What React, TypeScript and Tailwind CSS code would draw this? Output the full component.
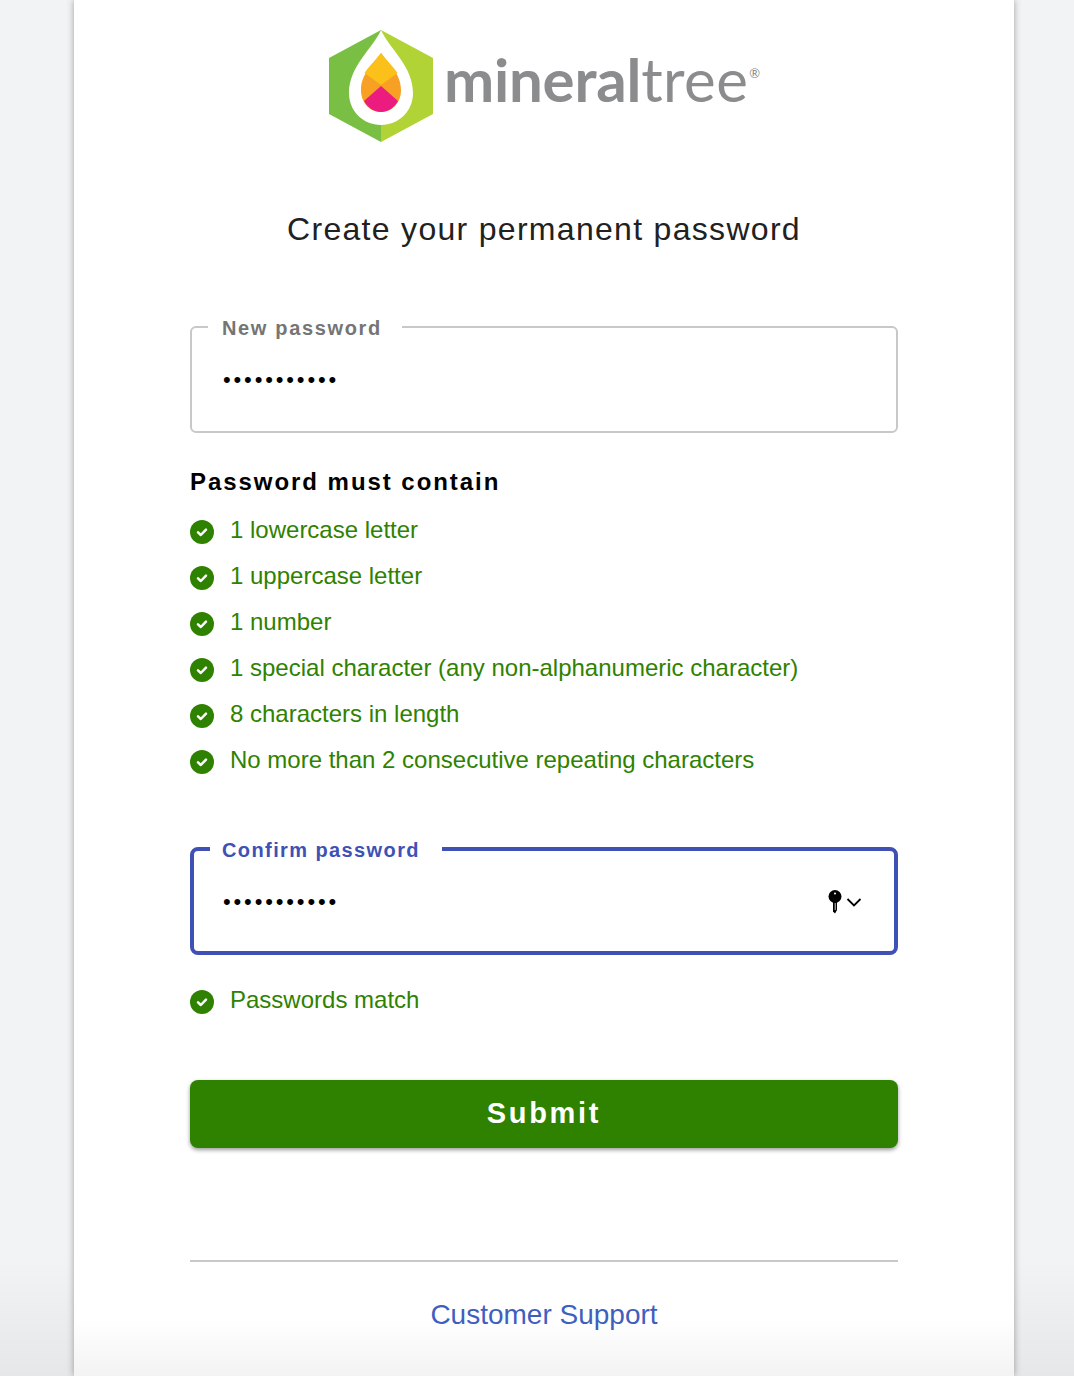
import React from "react";

const RULES = [
	"1 lowercase letter",
	"1 uppercase letter",
	"1 number",
	"1 special character (any non-alphanumeric character)",
	"8 characters in length",
	"No more than 2 consecutive repeating characters",
];

const DOTS = "•••••••••••";

const CheckBadge = () => (
	<svg className="w-6 h-6 shrink-0 mt-[4px]" viewBox="0 0 24 24">
		<circle cx="12" cy="12" r="12" fill="#2f8200" />
		<path
			d="M8 12.400l2.800 2.600 5.200-5.400"
			fill="none"
			stroke="#fff"
			strokeWidth="2.500"
			strokeLinecap="round"
			strokeLinejoin="round"
		/>
	</svg>
);

const Rule = ({ text }: { text: string }) => (
	<div className="flex items-start h-[46px]">
		<CheckBadge />
		<span className="ml-4 text-[24px] leading-[28px] text-[#2f8200] whitespace-nowrap">
			{text}
		</span>
	</div>
);

const Logo = () => (
	<div className="flex items-start justify-center h-[112px] pl-[1px]">
		<svg className="w-[104px] h-[112px] shrink-0" viewBox="0 0 104 112">
			<path d="M52 0L0 28v56l52 28z" fill="#78bf43" />
			<path d="M52 0l52 28v56l-52 28z" fill="#b1d335" />
			<path
				d="M52 0C44 18 20 36 20 63c0 18 14 32 32 32s32-14 32-32C84 36 60 18 52 0z"
				fill="#fff"
			/>
			<path
				d="M52 23C44 34 32 44 32 60c0 13 9 22 20 22s20-9 20-22C72 44 60 34 52 23z"
				fill="#f7a023"
			/>
			<path d="M52 23c-4 6-12 13-16.500 20L52 55l16.500-12C64 36 56 29 52 23z" fill="#fcc01b" />
			<path d="M35 71l17-15 17 15c-4 7-10 11-17 11s-13-4-17-11z" fill="#ec1b7f" />
		</svg>
		<div className="ml-[11px] mt-[14px] flex items-start text-[#8a8c8e] font-['Lato',sans-serif]">
			<span className="text-[60px] leading-[70px] font-bold tracking-[-0.2px]">mineral</span>
			<span className="text-[60px] leading-[70px] tracking-[0.4px]">tree</span>
			<span className="text-[13px] leading-[14px] mt-[22px] ml-[1px]">®</span>
		</div>
	</div>
);

export default function App() {
	return (
		<div className="h-[1376px] overflow-hidden bg-[linear-gradient(to_bottom,#f2f3f5_0,#f2f3f5_1260px,#e6e7e8_1376px)] font-['Liberation_Sans',Arial,sans-serif]">
			<div className="relative ml-[74px] w-[940px] h-full px-[116px] pt-[30px] bg-[linear-gradient(to_bottom,#ffffff_0,#ffffff_1320px,#f3f3f3_1376px)] shadow-[0_0_7px_rgba(0,0,0,0.35)]">
				<Logo />

				<h1 className="mt-[69px] text-center text-[32px] leading-[36px] tracking-[1.3px] text-[#212121]">
					Create your permanent password
				</h1>

				{/* New password */}
				<fieldset className="mt-[69px] h-[117px] border-2 border-[#c8c8c8] rounded-md pl-[30px] pr-4">
					<legend className="ml-[-14px] pl-[14px] pr-[20px] pt-[2px] text-[20px] leading-[20px] font-bold tracking-[1.65px] text-[#757575]">
						New password
					</legend>
					<div className="mt-[28px] pl-[1px] text-[22px] leading-[28px] tracking-[2.85px] text-black">{DOTS}</div>
				</fieldset>

				<h2 className="mt-[34px] text-[24px] leading-[30px] font-bold tracking-[1.95px] text-black">
					Password must contain
				</h2>

				<div className="mt-[19px]">
					{RULES.map((rule) => (
						<Rule key={rule} text={rule} />
					))}
				</div>

				{/* Confirm password */}
				<fieldset className="mt-[46px] h-[117px] border-4 border-[#3f51b5] rounded-lg pl-[28px] pr-8">
					<legend className="ml-[-12px] pl-[12px] pr-[22px] pt-[2px] text-[20px] leading-[20px] font-bold tracking-[1.4px] text-[#3f51b5]">
						Confirm password
					</legend>
					<div className="flex items-center justify-between mt-[28px] h-[28px]">
						<span className="pl-[1px] text-[22px] leading-[28px] tracking-[2.85px] text-black">{DOTS}</span>
						<span className="flex items-center gap-[4px]">
							<svg className="w-[14px] h-6" viewBox="0 0 14 24">
								<circle cx="7" cy="6.500" r="6.500" fill="#000" />
								<circle cx="7" cy="3.500" r="1" fill="#fff" />
								<path d="M5 11h4v9l-2 3.500-2-2z" fill="#000" />
								<path d="M7.200 13v7" stroke="#fff" strokeWidth="0.800" />
							</svg>
							<svg className="w-4 h-4" viewBox="0 0 16 16">
								<path d="M1.500 5l6.500 6.500L14.500 5" fill="none" stroke="#000" strokeWidth="1.800" />
							</svg>
						</span>
					</div>
				</fieldset>

				<div className="mt-[31px]">
					<Rule text="Passwords match" />
				</div>

				<button className="block w-full mt-[48px] h-[68px] rounded-lg bg-[#2f8200] text-white text-[29px] font-bold tracking-[2.7px] shadow-[0_2px_4px_rgba(0,0,0,0.4)]">
					Submit
				</button>

				<div className="mt-[112px] border-t-2 border-[#c8c8c8] pt-[36px] text-center">
					<a className="text-[28px] leading-[34px] text-[#3f5fbf]">Customer Support</a>
				</div>
			</div>
		</div>
	);
}
